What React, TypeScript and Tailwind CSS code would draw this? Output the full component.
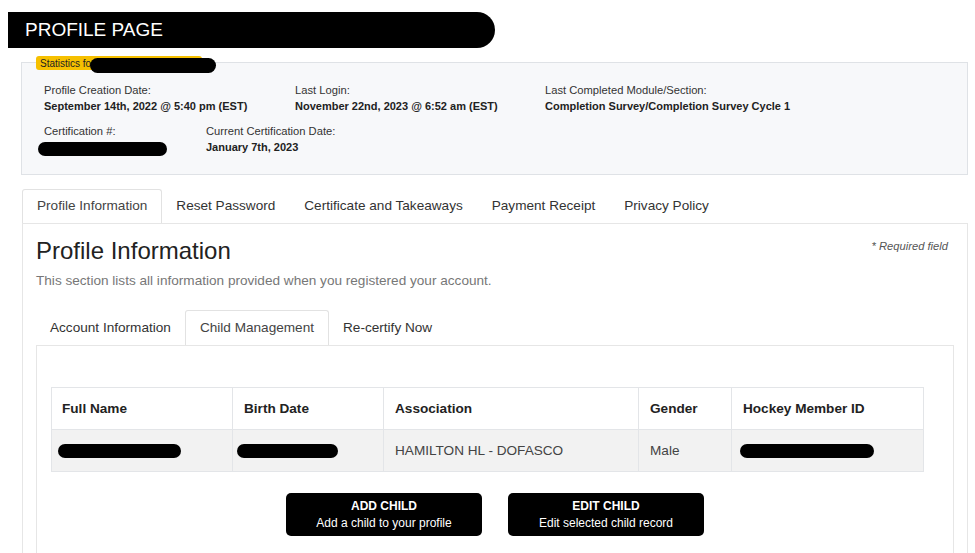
import React from 'react';

const MAIN_TABS = ['Profile Information', 'Reset Password', 'Certificate and Takeaways', 'Payment Receipt', 'Privacy Policy'];
const SUB_TABS = ['Account Information', 'Child Management', 'Re-certify Now'];

// black marker strokes that hide personal data
function Blot({ className }: { className: string }) {
  return <span className={`block rounded-full bg-black ${className}`} />;
}

function Stat({ label, value, width }: { label: string; value: React.ReactNode; width: string }) {
  return (
    <div className={`${width} shrink-0`}>
      <div className="text-[11.2px] leading-[16px] text-[#333]">{label}</div>
      <div className="text-[11px] leading-[16px] font-bold text-[#222]">{value}</div>
    </div>
  );
}

export default function App() {
  return (
    <div className="min-h-screen bg-white pt-[12px] font-['Liberation_Sans',Arial,sans-serif] text-[#333]">
      {/* Header */}
      <div className="ml-[8px] flex h-[36px] w-[487px] items-center rounded-r-full bg-black pl-[17px] text-[19px] text-white">
        PROFILE PAGE
      </div>

      {/* Statistics */}
      <div className="relative ml-[21px] mr-[7px] mt-[14px] border border-[#dfe2e6] bg-[#f7f8fa] pb-[18px] pl-[22px] pt-[19px]">
        <div className="absolute left-[14px] top-[-7px] flex h-[14px] w-[166px] items-center rounded-[3px] bg-[#f6c000] pl-[4px] text-[10px] text-[#222]">
          Statistics fo
        </div>
        <Blot className="absolute left-[68px] top-[-5px] h-[15px] w-[126px]" />
        <div className="flex">
          <Stat width="w-[251px]" label="Profile Creation Date:" value="September 14th, 2022 @ 5:40 pm (EST)" />
          <Stat width="w-[250px]" label="Last Login:" value="November 22nd, 2023 @ 6:52 am (EST)" />
          <Stat width="w-[300px]" label="Last Completed Module/Section:" value="Completion Survey/Completion Survey Cycle 1" />
        </div>
        <div className="mt-[9px] flex">
          <div className="w-[162px] shrink-0">
            <div className="text-[11.2px] leading-[16px] text-[#333]">Certification #:</div>
            <Blot className="-ml-[6px] mt-[3px] h-[14px] w-[129px]" />
          </div>
          <Stat width="w-[250px]" label="Current Certification Date:" value="January 7th, 2023" />
        </div>
      </div>

      {/* Main tabs */}
      <div className="ml-[22px] mr-[7px] mt-[14px]">
        <div className="flex">
          {MAIN_TABS.map((t, i) => (
            <div
              key={t}
              className={`flex h-[34px] items-center px-[14px] text-[13.6px] ${
                i === 0
                  ? 'relative -mb-px rounded-t-[3px] border border-b-0 border-[#e2e2e2] bg-white text-[#444]'
                  : 'mr-px text-[#333]'
              }`}
            >
              {t}
            </div>
          ))}
        </div>

        <div className="border border-[#e6e6e6] px-[13px] pt-[12px]">
          <div className="flex items-start justify-between pr-[6px]">
            <h2 className="text-[24px] leading-[30px] text-[#222]">Profile Information</h2>
            <span className="mt-[2px] text-[11.2px] italic text-[#555]">* Required field</span>
          </div>
          <p className="mt-[5px] text-[13.6px] text-[#777]">This section lists all information provided when you registered your account.</p>

          {/* Sub tabs */}
          <div className="mt-[19px] flex">
            {SUB_TABS.map((t, i) => (
              <div
                key={t}
                className={`flex h-[35px] items-center px-[14px] text-[13.6px] ${
                  i === 1
                    ? 'relative -mb-px rounded-t-[3px] border border-b-0 border-[#e2e2e2] bg-white text-[#444]'
                    : 'text-[#333]'
                }`}
              >
                {t}
              </div>
            ))}
          </div>

          <div className="border border-[#e6e6e6] px-[14px] pb-[30px] pt-[41px]">
            <table className="w-[873px] border-collapse text-[13.6px]">
              <thead>
                <tr className="h-[42px] bg-white text-left font-bold text-[#222]">
                  <th className="w-[181px] border border-[#e3e5e8] pl-[10px]">Full Name</th>
                  <th className="w-[151px] border border-[#e3e5e8] pl-[11px]">Birth Date</th>
                  <th className="w-[255px] border border-[#e3e5e8] pl-[11px]">Association</th>
                  <th className="w-[93px] border border-[#e3e5e8] pl-[11px]">Gender</th>
                  <th className="border border-[#e3e5e8] pl-[11px]">Hockey Member ID</th>
                </tr>
              </thead>
              <tbody>
                <tr className="h-[42px] bg-[#f2f2f2] text-[#444]">
                  <td className="border border-[#e3e5e8] pl-[6px]">
                    <Blot className="h-[14px] w-[123px]" />
                  </td>
                  <td className="border border-[#e3e5e8] pl-[4px]">
                    <Blot className="h-[14px] w-[101px]" />
                  </td>
                  <td className="border border-[#e3e5e8] pl-[11px]">HAMILTON HL - DOFASCO</td>
                  <td className="border border-[#e3e5e8] pl-[11px]">Male</td>
                  <td className="border border-[#e3e5e8] pl-[8px]">
                    <Blot className="h-[14px] w-[134px]" />
                  </td>
                </tr>
              </tbody>
            </table>

            <div className="mt-[21px] flex justify-center gap-[26px]">
              <button className="flex h-[43px] w-[196px] flex-col items-center justify-center rounded-[5px] bg-black text-[12px] leading-[17px] text-white">
                <span className="font-bold">ADD CHILD</span>
                <span>Add a child to your profile</span>
              </button>
              <button className="flex h-[43px] w-[196px] flex-col items-center justify-center rounded-[5px] bg-black text-[12px] leading-[17px] text-white">
                <span className="font-bold">EDIT CHILD</span>
                <span>Edit selected child record</span>
              </button>
            </div>
          </div>
        </div>
      </div>
    </div>
  );
}
